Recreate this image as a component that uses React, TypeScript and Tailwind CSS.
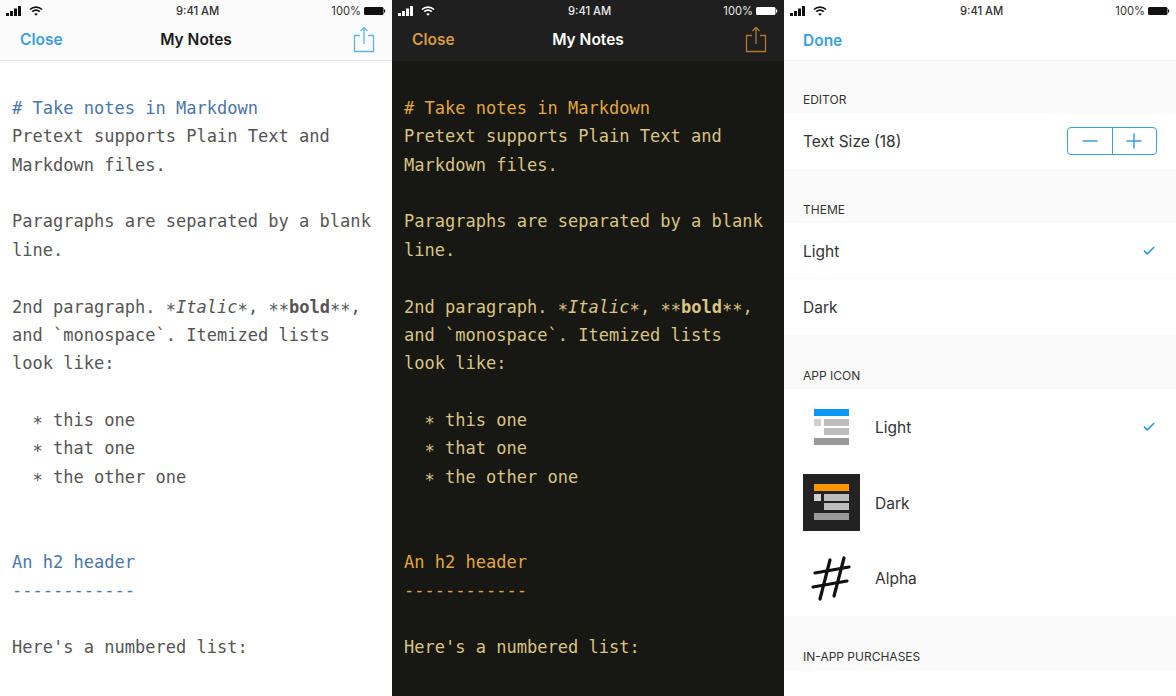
import { Check, Minus, Plus } from 'lucide-react';

// the reference's mono font sets the asterisk lower than DejaVu does
function Ast() {
  return <span className="inline-block translate-y-[3px] font-normal not-italic">*</span>;
}

const lines: { text?: React.ReactNode; head?: boolean }[] = [
  { text: '# Take notes in Markdown', head: true },
  { text: 'Pretext supports Plain Text and' },
  { text: 'Markdown files.' },
  {},
  { text: 'Paragraphs are separated by a blank' },
  { text: 'line.' },
  {},
  {
    text: (
      <>
        2nd paragraph. <Ast /><i>Italic</i><Ast />, <Ast /><Ast /><b>bold</b><Ast /><Ast />,
      </>
    ),
  },
  { text: 'and `monospace`. Itemized lists' },
  { text: 'look like:' },
  {},
  { text: <>{'  '}<Ast /> this one</> },
  { text: <>{'  '}<Ast /> that one</> },
  { text: <>{'  '}<Ast /> the other one</> },
  {},
  {},
  { text: 'An h2 header', head: true },
  { text: '------------', head: true },
  {},
  { text: "Here's a numbered list:" },
];

function StatusBar({ dark }: { dark?: boolean }) {
  const fill = dark ? '#ffffff' : '#111111';
  return (
    <div className={`relative flex h-5 items-center justify-between pl-[6px] pr-[6px] pt-[2px] text-[11.2px] ${dark ? 'text-[#e8e8e8]' : 'text-[#333]'}`}>
      <div className="flex items-center gap-[8px]">
        <svg width="15" height="10" viewBox="0 0 15 10" fill={fill}>
          <rect x="0" y="7" width="3" height="3" />
          <rect x="4" y="5" width="3" height="5" />
          <rect x="8" y="2.5" width="3" height="7.5" />
          <rect x="12" y="0" width="3" height="10" />
        </svg>
        <svg width="14" height="10" viewBox="0 0 14 10" fill="none" stroke={fill} strokeWidth="1.7">
          <path d="M1 3.5C4.4 .3 9.6 .3 13 3.5" />
          <path d="M3.2 5.7C5.4 3.8 8.6 3.8 10.8 5.7" />
          <path d="M7 9.8 5.2 7.9C6.2 7 7.8 7 8.8 7.9Z" fill={fill} stroke="none" />
        </svg>
      </div>
      <span className="absolute left-[176px] font-medium">9:41 AM</span>
      <div className="flex items-center gap-[3px]">
        <span>100%</span>
        <svg width="22" height="10" viewBox="0 0 22 10" fill={fill}>
          <rect x="0" y="1" width="19.5" height="8" rx="1.5" />
          <rect x="20" y="3.5" width="1.2" height="3" />
        </svg>
      </div>
    </div>
  );
}

function ShareIcon({ color }: { color: string }) {
  return (
    <svg width="22" height="28" viewBox="0 0 22 28" fill="none" stroke={color} strokeWidth="1.3">
      <path d="M7 9.5H1.5V25.5H20.5V9.5H15" />
      <path d="M11 18V1.5" />
      <path d="M7.5 5 11 1.5 14.5 5" />
    </svg>
  );
}

function NotesPanel({ dark }: { dark?: boolean }) {
  const accent = dark ? 'text-[#d89a3e]' : 'text-[#3a9fe0]';
  return (
    <div className={`flex h-full w-[392px] shrink-0 flex-col overflow-hidden ${dark ? 'bg-[#171714]' : 'bg-white'}`}>
      <div className={`h-[61px] shrink-0 border-b ${dark ? 'border-[#1c1c1b] bg-[#1f1f1f]' : 'border-[#e8e8e8] bg-[#fbfbfb]'}`}>
        <StatusBar dark={dark} />
        <div className="relative flex h-[40px] items-center justify-between pl-[20px] pr-[17px]">
          <span className={`text-[15.5px] font-semibold ${accent}`}>Close</span>
          <span className={`absolute left-0 right-0 text-center text-[15.5px] font-semibold ${dark ? 'text-white' : 'text-[#1a1a1a]'}`}>My Notes</span>
          <div className="-mt-[1px]">
            <ShareIcon color={dark ? '#b07a2c' : '#5fb4e6'} />
          </div>
        </div>
      </div>
      <div className="pl-3 pt-[33px] font-['DejaVu_Sans_Mono',monospace] text-[17.05px] leading-[28.37px]">
        {lines.map((l, i) => (
          <div
            key={i}
            className={`h-[28.37px] whitespace-pre ${
              l.head
                ? dark
                  ? 'text-[#e2a63f]'
                  : 'text-[#4a76a8]'
                : dark
                  ? 'text-[#d9c481]'
                  : 'text-[#555555]'
            }`}
          >
            {l.text}
          </div>
        ))}
      </div>
    </div>
  );
}

function SectionHead({ label, height = 'h-[54px]' }: { label: string; height?: string }) {
  return (
    <div className={`flex ${height} shrink-0 items-end bg-[#fafafa] pb-[4px] pl-[19px] text-[12px] text-[#333]`}>{label}</div>
  );
}

function Tick() {
  return <Check size={14} strokeWidth={3} className="text-[#2f9fe4]" />;
}

function AppIcon({ dark }: { dark?: boolean }) {
  return (
    <div className={`flex h-[57px] w-[57px] items-center justify-center ${dark ? 'bg-[#222222]' : ''}`}>
      <svg width="35" height="36" viewBox="0 0 35 36">
        <rect x="0" y="0" width="35" height="7" fill={dark ? '#ff9500' : '#0a97f5'} />
        <rect x="0" y="10" width="7" height="7" fill="#cfcfcf" />
        <rect x="10" y="10" width="25" height="7" fill="#bdbdbd" />
        <rect x="10" y="19" width="25" height="7" fill="#bdbdbd" />
        <rect x="0" y="29" width="35" height="7" fill="#999999" />
      </svg>
    </div>
  );
}

function HashIcon() {
  return (
    <svg width="57" height="57" viewBox="0 0 57 57" fill="none" stroke="#111" strokeWidth="3.2" strokeLinecap="round">
      <path d="M27 11 17 50" />
      <path d="M41 9 31 47" />
      <path d="M12 24 46 18" />
      <path d="M10 38 44 32" />
    </svg>
  );
}

function IconRow({ name, checked, children }: { name: string; checked?: boolean; children: React.ReactNode }) {
  return (
    <div className="flex h-[75.5px] shrink-0 items-center bg-white pl-[19px] pr-[20px]">
      {children}
      <span className="ml-[15px] flex-1 pt-[2px] text-[15.5px] text-[#333]">{name}</span>
      {checked && <Tick />}
    </div>
  );
}

function SettingsPanel() {
  return (
    <div className="flex h-full w-[392px] shrink-0 flex-col overflow-hidden bg-white">
      <div className="h-[61px] shrink-0 border-b border-[#f0f0f0] bg-white">
        <StatusBar />
        <div className="flex h-[40px] items-center pl-[19px]">
          <span className="pt-[2px] text-[15.5px] font-semibold text-[#3a9fe0]">Done</span>
        </div>
      </div>
      <SectionHead label="EDITOR" height="h-[52px]" />
      <div className="flex h-[56px] shrink-0 items-center justify-between bg-white pl-[19px] pr-[19px]">
        <span className="pt-[2px] text-[15.5px] text-[#333]">Text Size (18)</span>
        <div className="flex h-[28px] w-[90px] rounded-[4px] border border-[#3a9fe0] text-[#3a9fe0]">
          <div className="flex flex-1 items-center justify-center border-r border-[#3a9fe0]">
            <Minus size={24} strokeWidth={1.5} />
          </div>
          <div className="flex flex-1 items-center justify-center">
            <Plus size={24} strokeWidth={1.5} />
          </div>
        </div>
      </div>
      <SectionHead label="THEME" />
      <div className="flex h-[56px] shrink-0 items-center justify-between border-b border-[#f6f6f6] bg-white pl-[19px] pr-[20px]">
        <span className="pt-[2px] text-[15.5px] text-[#333]">Light</span>
        <Tick />
      </div>
      <div className="flex h-[56px] shrink-0 items-center bg-white pl-[19px]">
        <span className="pt-[2px] text-[15.5px] text-[#333]">Dark</span>
      </div>
      <SectionHead label="APP ICON" />
      <IconRow name="Light" checked>
        <AppIcon />
      </IconRow>
      <IconRow name="Dark">
        <AppIcon dark />
      </IconRow>
      <IconRow name="Alpha">
        <HashIcon />
      </IconRow>
      <SectionHead label="IN-APP PURCHASES" />
      <div className="flex-1 bg-white" />
    </div>
  );
}

export default function App() {
  return (
    <div className="flex h-[696px] w-[1176px] overflow-hidden font-['Inter',sans-serif]">
      <NotesPanel />
      <NotesPanel dark />
      <SettingsPanel />
    </div>
  );
}
